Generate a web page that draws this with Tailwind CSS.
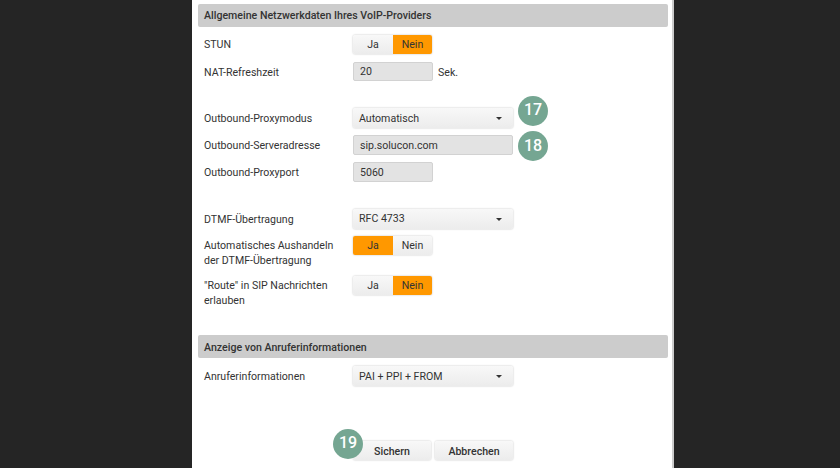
<!DOCTYPE html>
<html lang="de">
<head>
    <meta charset="UTF-8">
    <title>Netzwerkdaten</title>
    <script src="https://cdn.jsdelivr.net/npm/@tailwindcss/browser@4"></script>
</head>
<body class="bg-[#252525] h-[468px] w-[840px] overflow-hidden font-['Roboto',sans-serif] text-[10.6px] text-[#333]">
    <div class="ml-[192px] w-[482px] h-[468px] bg-white border-r-2 border-[#ccc] pl-[6px] pr-[5px] pt-[4px]">

        <!-- Allgemeine Netzwerkdaten -->
        <h2 class="h-[23px] w-[470px] bg-[#ccc] rounded-[2px] pl-[6px] font-medium leading-[23px] text-[#333]">Allgemeine Netzwerkdaten Ihres VoIP-Providers</h2>

        <div class="flex mt-[8px] h-[19px] items-center">
            <label class="w-[155px] pl-[6px] pt-[1px]">STUN</label>
            <div class="flex w-[79px] h-[19px] rounded-[2px] shadow-[0_0_2px_#bbb] leading-[19px] text-center">
                <span class="w-[40px] bg-linear-to-b from-[#f8f8f8] to-[#ececec] rounded-l-[2px]">Ja</span>
                <span class="w-[39px] bg-[#ff9800] rounded-r-[2px]">Nein</span>
            </div>
        </div>

        <div class="flex mt-[8px] h-[19px] items-center">
            <label class="w-[155px] pl-[6px] pt-[3px]">NAT-Refreshzeit</label>
            <div class="w-[80px] h-[19px] bg-[#e3e3e3] border border-[#d2d2d2] rounded-[2px] pl-[6px] leading-[18px]">20</div>
            <span class="ml-[5px] pt-[2px]">Sek.</span>
        </div>

        <div class="flex mt-[27px] h-[20px] items-center">
            <label class="w-[155px] pl-[6px] pt-[2px]">Outbound-Proxymodus</label>
            <div class="relative flex items-center justify-between w-[160px] h-[20px] bg-linear-to-b from-[#f8f8f8] to-[#ececec] rounded-[2px] shadow-[0_0_2px_#bbb] pl-[6px] pr-[11px]">
                <span class="pt-[2px]">Automatisch</span>
                <span class="border-x-[3px] border-t-[3px] border-x-transparent border-t-[#333]"></span>
                <span class="absolute left-[165px] top-[-12px] size-[30px] rounded-full bg-[#75a692] text-white font-medium text-[16px] leading-[28px] text-center">17</span>
            </div>
        </div>

        <div class="flex mt-[7px] h-[20px] items-center">
            <label class="w-[155px] pl-[6px] pt-[2px]">Outbound-Serveradresse</label>
            <div class="relative w-[160px] h-[20px] bg-[#e3e3e3] border border-[#d2d2d2] rounded-[2px] pl-[6px] leading-[19px]">
                sip.solucon.com
                <span class="absolute left-[164px] top-[-5px] size-[30px] rounded-full bg-[#75a692] text-white font-medium text-[16px] leading-[30px] text-center">18</span>
            </div>
        </div>

        <div class="flex mt-[7px] h-[20px] items-center">
            <label class="w-[155px] pl-[6px] pt-[2px]">Outbound-Proxyport</label>
            <div class="w-[80px] h-[20px] bg-[#e3e3e3] border border-[#d2d2d2] rounded-[2px] pl-[6px] leading-[19px]">5060</div>
        </div>

        <div class="flex mt-[27px] h-[20px] items-center">
            <label class="w-[155px] pl-[6px] pt-[1px]">DTMF-Übertragung</label>
            <div class="flex items-center justify-between w-[160px] h-[20px] bg-linear-to-b from-[#f8f8f8] to-[#ececec] rounded-[2px] shadow-[0_0_2px_#bbb] pl-[6px] pr-[11px]">
                RFC 4733
                <span class="border-x-[3px] border-t-[3px] border-x-transparent border-t-[#333]"></span>
            </div>
        </div>

        <div class="flex mt-[7px]">
            <label class="w-[155px] pl-[6px] leading-[15px] pt-[2px]">Automatisches Aushandeln<br>der DTMF-Übertragung</label>
            <div class="flex w-[79px] h-[19px] rounded-[2px] shadow-[0_0_2px_#bbb] leading-[19px] text-center">
                <span class="w-[40px] bg-[#ff9800] rounded-l-[2px]">Ja</span>
                <span class="w-[39px] bg-linear-to-b from-[#f8f8f8] to-[#ececec] rounded-r-[2px]">Nein</span>
            </div>
        </div>

        <div class="flex mt-[8px]">
            <label class="w-[155px] pl-[6px] leading-[15px] pt-[2px]">"Route" in SIP Nachrichten<br>erlauben</label>
            <div class="flex w-[79px] h-[19px] rounded-[2px] shadow-[0_0_2px_#bbb] leading-[19px] text-center">
                <span class="w-[40px] bg-linear-to-b from-[#f8f8f8] to-[#ececec] rounded-l-[2px]">Ja</span>
                <span class="w-[39px] bg-[#ff9800] rounded-r-[2px]">Nein</span>
            </div>
        </div>

        <!-- Anzeige von Anruferinformationen -->
        <h2 class="mt-[27px] h-[23px] w-[470px] bg-[#ccc] rounded-[2px] pl-[6px] font-medium leading-[25px] text-[#333]">Anzeige von Anruferinformationen</h2>

        <div class="flex mt-[8px] h-[20px] items-center">
            <label class="w-[155px] pl-[6px] pt-[2px]">Anruferinformationen</label>
            <div class="flex items-center justify-between w-[160px] h-[20px] bg-linear-to-b from-[#f8f8f8] to-[#ececec] rounded-[2px] shadow-[0_0_2px_#bbb] pl-[6px] pr-[11px]">
                <span class="pt-[2px]">PAI + PPI + FROM</span>
                <span class="border-x-[3px] border-t-[3px] border-x-transparent border-t-[#333]"></span>
            </div>
        </div>

        <div class="flex gap-[4px] mt-[55px] ml-[155px]">
            <button class="relative w-[78px] h-[19px] bg-linear-to-b from-[#f8f8f8] to-[#ececec] rounded-[2px] shadow-[0_0_2px_#bbb] font-medium text-center leading-[21px]">
                Sichern
                <span class="absolute left-[-20px] top-[-12px] size-[30px] rounded-full bg-[#75a692] text-white text-[16px] leading-[28px] text-center">19</span>
            </button>
            <button class="w-[78px] h-[19px] bg-linear-to-b from-[#f8f8f8] to-[#ececec] rounded-[2px] shadow-[0_0_2px_#bbb] font-medium text-center leading-[21px]">Abbrechen</button>
        </div>
    </div>
</body>
</html>
